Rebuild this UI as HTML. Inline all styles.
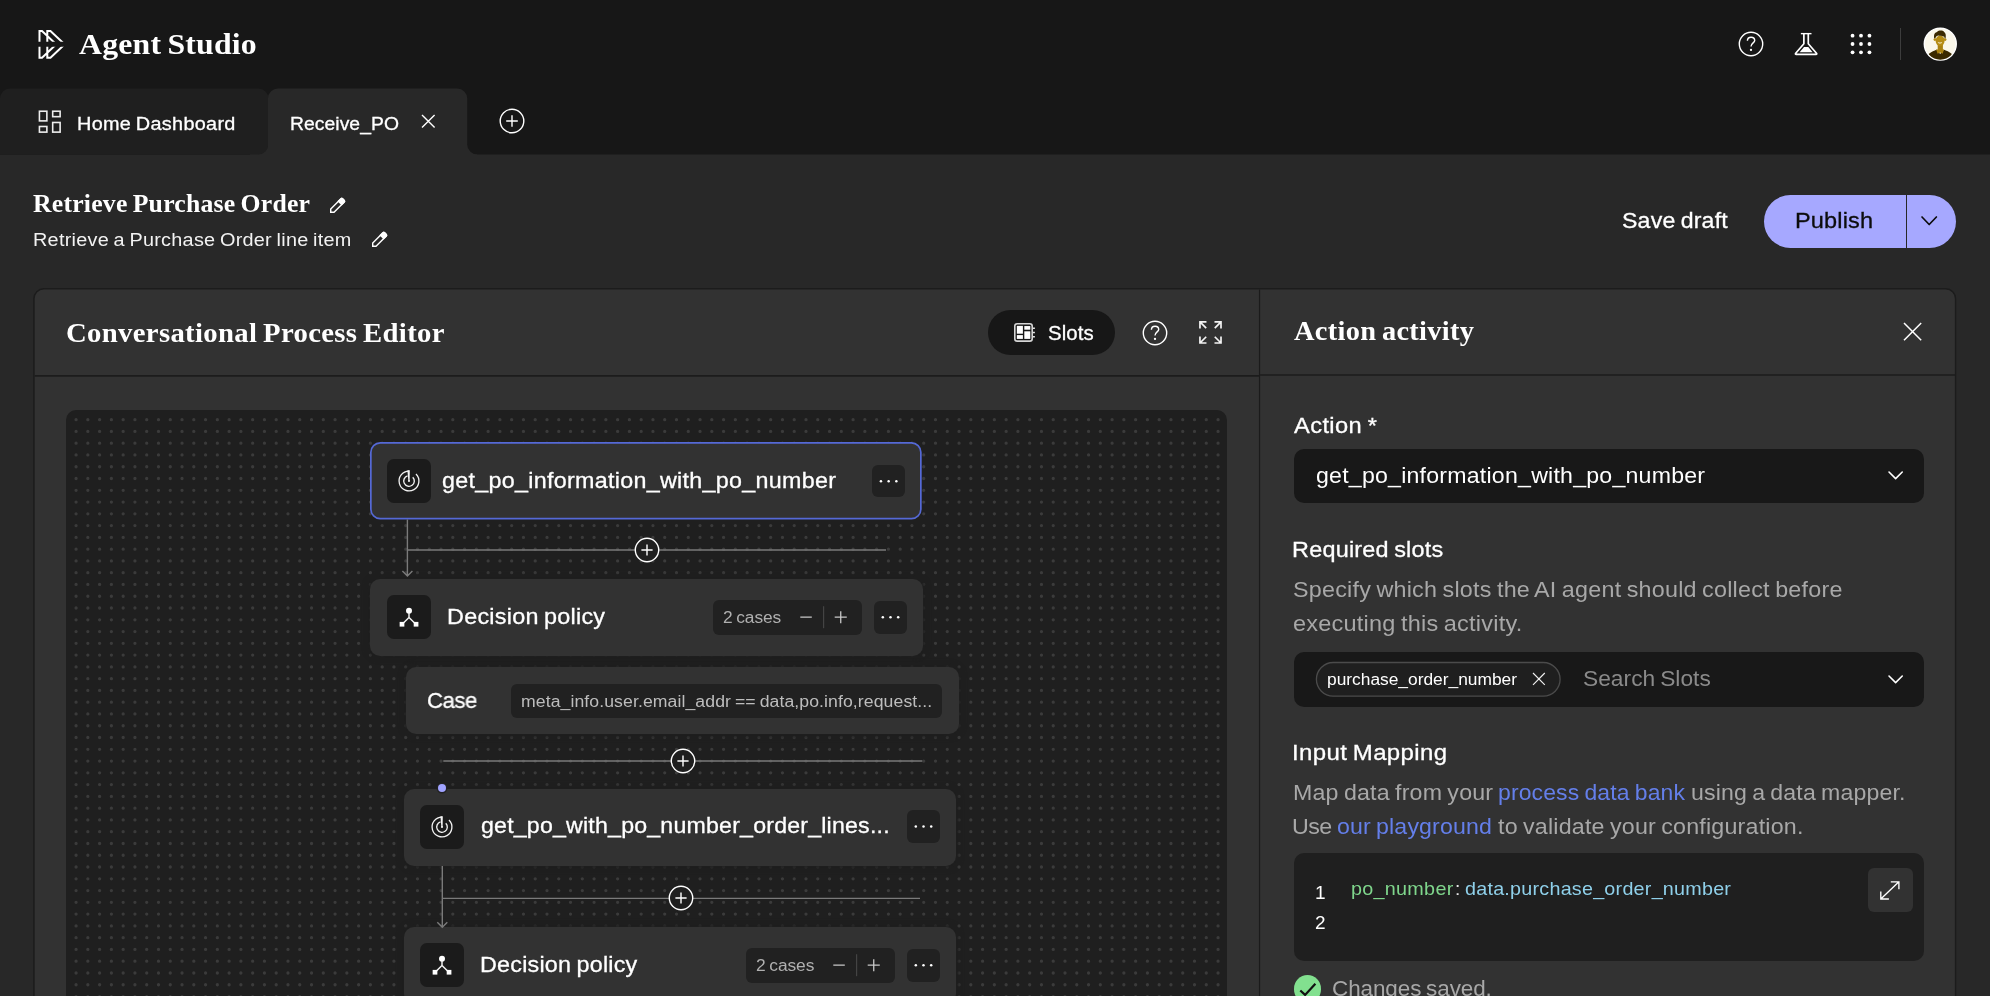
<!DOCTYPE html><html lang="en"><head><meta charset="utf-8"><title>Agent Studio</title><style>
*{box-sizing:border-box;margin:0;padding:0}
html,body{width:1990px;height:996px;overflow:hidden;background:#282828}
body{position:relative;font-family:"Liberation Sans",sans-serif;color:#fff}
.a{position:absolute}
.tx{position:absolute;white-space:nowrap;display:block;transform-origin:0 0;will-change:transform;word-spacing:-0.06em}
.med{-webkit-text-stroke:0.3px currentColor}
svg{position:absolute;overflow:visible}
#canvas{left:66.2px;top:410.2px;width:1160.8px;height:620px;border-radius:10px;background-color:#1f1f1f;overflow:hidden}
.node{background:#323232;border-radius:10px;box-shadow:0 0 5px 3px rgba(31,31,31,.95)}
.ibox{background:#1b1b1b;border-radius:7px}
.dk{background:#212121;border-radius:6px}
.fld{background:#181818;border-radius:10px}
</style></head><body>
<svg id="topbar" style="left:0;top:0" width="1990" height="160" viewBox="0 0 1990 160" fill="none"><rect x="0" y="0" width="1990" height="154.5" fill="#171717"/><rect x="250" y="130" width="20" height="26" fill="#282828"/><path d="M0 98.5A10 10 0 0 1 10 88.5H258.4A10 10 0 0 1 268.4 98.5V144.5A10 10 0 0 1 258.4 154.5H0Z" fill="#1f1f1f"/><path d="M268 156V98.5A10 10 0 0 1 278.4 88.5H457.2A10 10 0 0 1 467.2 98.5V144.5A10 10 0 0 0 477.2 154.5V156Z" fill="#282828"/></svg>
<svg style="left:30px;top:24px" width="42" height="42" viewBox="0 0 42 42" fill="none" ><defs><clipPath id="lg1"><rect x="0" y="0" width="42" height="17.75"/></clipPath><clipPath id="lg2"><rect x="0" y="22.75" width="42" height="20"/></clipPath></defs><g stroke="#fff" stroke-width="2" stroke-linejoin="miter"><g clip-path="url(#lg1)"><path d="M9.49 19V6.96H12.02L24.77 19M17.29 19V6.96H20.46L33.21 19"/></g><g clip-path="url(#lg2)"><path d="M9.49 21.5V33.74H12.02L24.98 21.5M17.29 21.5V33.74H20.46L33.42 21.5"/></g></g></svg>
<span id="t1" class="tx" style="left:79.00px;top:28.6px;font:700 30.4px/1 'Liberation Serif',serif;color:#fff;letter-spacing:0.197px;transform:scaleX(1.0449);">Agent Studio</span>
<svg style="left:30px;top:102px" width="40" height="40" viewBox="0 0 40 40" fill="none" ><g stroke="#ededed" stroke-width="1.6"><rect x="9.43" y="9.23" width="7.44" height="9.65"/><rect x="22.69" y="9.23" width="7.43" height="5.43"/><rect x="9.43" y="24.50" width="7.44" height="5.62"/><rect x="22.69" y="20.48" width="7.43" height="9.64"/></g></svg>
<span id="t2" class="tx med" style="left:77.00px;top:114.6px;font:400 18.9px/1 'Liberation Sans',sans-serif;color:#fff;letter-spacing:0.292px;transform:scaleX(1.0511);">Home Dashboard</span>
<span id="t3" class="tx med" style="left:290.40px;top:114.6px;font:400 18.9px/1 'Liberation Sans',sans-serif;color:#fff;letter-spacing:0.055px;transform:scaleX(1.0223);">Receive_PO</span>
<svg style="left:421.9px;top:115.2px" width="12.6" height="12.6" viewBox="0 0 12.6 12.6" fill="none" ><path d="M0 0L12.6 12.6M12.6 0L0 12.6" stroke="#fff" stroke-width="1.4"/></svg>
<svg style="left:511.5px;top:121.1px" width="1" height="1" viewBox="0 0 1 1" fill="none" ><circle cx="0" cy="0" r="11.8" stroke="#fff" stroke-width="1.4"/><path d="M-5.8 0H5.8M0 -5.8V5.8" stroke="#fff" stroke-width="1.4"/></svg>
<svg style="left:1750.8px;top:44.1px" width="1" height="1" viewBox="0 0 1 1" fill="none" ><circle cx="0" cy="0" r="11.7" stroke="#fff" stroke-width="1.4"/><path d="M-3.6 -3.2C-3.6 -5.6 -1.9 -6.8 0.1 -6.8C2.2 -6.8 3.7 -5.5 3.7 -3.6C3.7 -1.2 0 -0.9 0 2.6" stroke="#fff" stroke-width="1.4" transform="scale(1.0)"/><circle cx="0" cy="5.9" r="1.15" fill="#fff"/></svg>
<svg style="left:1786px;top:24px" width="40" height="40" viewBox="0 0 40 40" fill="none" ><path d="M14.86 9.64H25.5" stroke="#fff" stroke-width="1.4"/><path d="M17.87 9.64V19.68L9.7 29.3Q9 30.3 10.2 30.3H30Q31.2 30.3 30.5 29.3L22.29 19.68V9.64" stroke="#fff" stroke-width="1.7" stroke-linejoin="round"/><path d="M18.07 23.1H22.3L26.6 28.3H13.6Z" fill="#fff"/></svg>
<svg style="left:1861.3px;top:44.4px" width="1" height="1" viewBox="0 0 1 1" fill="none" ><circle cx="-8.45" cy="-8.3" r="1.9" fill="#fff"/><circle cx="-8.45" cy="0" r="1.9" fill="#fff"/><circle cx="-8.45" cy="8.3" r="1.9" fill="#fff"/><circle cx="0" cy="-8.3" r="1.9" fill="#fff"/><circle cx="0" cy="0" r="1.9" fill="#fff"/><circle cx="0" cy="8.3" r="1.9" fill="#fff"/><circle cx="8.45" cy="-8.3" r="1.9" fill="#fff"/><circle cx="8.45" cy="0" r="1.9" fill="#fff"/><circle cx="8.45" cy="8.3" r="1.9" fill="#fff"/></svg>
<div class="a" style="left:1900px;top:28px;width:1.4px;height:32.4px;background:#3d3d3d"></div>
<svg style="left:1920px;top:24px" width="40" height="40" viewBox="0 0 40 40" fill="none" ><defs><clipPath id="avc"><circle cx="20.28" cy="20.08" r="15.6"/></clipPath></defs><circle cx="20.28" cy="20.08" r="16" fill="#faf7ea" stroke="#fff" stroke-width="1.4"/><g clip-path="url(#avc)"><path d="M8.6 30C11.5 27.6 14.6 26.4 16.4 25.7L20.2 30L24 25.7C26.2 26.4 29.2 27.8 31.9 30C30.5 34 25 36.5 20.3 36.5C15 36.5 10.5 34 8.6 30Z" fill="#3a2900"/><path d="M17.7 20.5H22.9V25.4L24.1 25.2L22.6 29.8L20.2 28.4L17.6 29.8L16.1 25.2L17.7 25.4Z" fill="#a98110"/><circle cx="14.9" cy="15.6" r="1.35" fill="#b38a12"/><circle cx="25.1" cy="15.6" r="1.35" fill="#b38a12"/><ellipse cx="20.1" cy="16.7" rx="4.5" ry="5.2" fill="#b58c14"/><path d="M14.1 14.2C13.6 10.8 14.4 8.6 17 8C18.6 6.2 22.6 6 24.2 8C26 9.4 26 11.8 25.6 14.2L24.5 14.2C24.6 12.8 24 12.2 23.4 12.6C21.6 11.6 20 12.4 18.6 11.6C17 12 15.8 12.6 15.4 14.2Z" fill="#3a2900"/><path d="M17.7 18.1C19 18.6 21 18.6 22.2 18.1C21.8 20.2 18.2 20.2 17.7 18.1Z" fill="#efe2b8"/></g></svg>
<span id="t4" class="tx" style="left:33.40px;top:191.8px;font:700 24.3px/1 'Liberation Serif',serif;color:#fff;letter-spacing:0.212px;transform:scaleX(1.0583);">Retrieve Purchase Order</span>
<svg style="left:330.36px;top:212.83px" width="1" height="1" viewBox="0 0 1 1" fill="none" ><g transform="rotate(45)"><path d="M0 -1.03L-2.33 -3.36V-17.5Q-2.33 -19 -0.83 -19H0.83Q2.33 -19 2.33 -17.5V-3.36Z" stroke="#fff" stroke-width="1.45" stroke-linejoin="miter"/><path d="M-3.05 -13.5V-17.9Q-3.05 -19.7 -1.25 -19.7H1.25Q3.05 -19.7 3.05 -17.9V-13.5Z" fill="#fff"/></g></svg>
<span id="t5" class="tx" style="left:32.90px;top:231.4px;font:400 18.9px/1 'Liberation Sans',sans-serif;color:#f2f2f2;letter-spacing:0.247px;transform:scaleX(1.0506);">Retrieve a Purchase Order line item</span>
<svg style="left:372.36px;top:246.5px" width="1" height="1" viewBox="0 0 1 1" fill="none" ><g transform="rotate(45)"><path d="M0 -1.03L-2.33 -3.36V-17.5Q-2.33 -19 -0.83 -19H0.83Q2.33 -19 2.33 -17.5V-3.36Z" stroke="#fff" stroke-width="1.45" stroke-linejoin="miter"/><path d="M-3.05 -13.5V-17.9Q-3.05 -19.7 -1.25 -19.7H1.25Q3.05 -19.7 3.05 -17.9V-13.5Z" fill="#fff"/></g></svg>
<span id="t6" class="tx med" style="left:1621.64px;top:210.3px;font:400 22.4px/1 'Liberation Sans',sans-serif;color:#fff;letter-spacing:0.181px;transform:scaleX(1.0324);">Save draft</span>
<div class="a" style="left:1763.9px;top:195.1px;width:191.9px;height:52.7px;border-radius:26.4px;background:#a6a8ff"></div>
<div class="a" style="left:1905.6px;top:195.1px;width:1.3px;height:52.7px;background:#282828"></div>
<span id="t7" class="tx med" style="left:1795.38px;top:210.3px;font:400 22.4px/1 'Liberation Sans',sans-serif;color:#0c0c0c;letter-spacing:0.155px;transform:scaleX(1.0500);">Publish</span>
<svg style="left:1921.7px;top:217.25px" width="14.4" height="7.5" viewBox="0 0 14.4 7.5" fill="none" ><path d="M0 0L7.2 7.5L14.4 0" stroke="#0c0c0c" stroke-width="1.7" stroke-linecap="round" stroke-linejoin="round"/></svg>
<svg id="panel" style="left:0;top:0" width="1990" height="996" viewBox="0 0 1990 996" fill="none"><rect x="33.95" y="288.8" width="1921.6" height="730" rx="9.8" fill="#323232" stroke="#1c1c1c" stroke-width="1.45"/><path d="M1259.55 289.5V996" stroke="#1b1b1b" stroke-width="1.2"/><path d="M34.6 375.9H1259" stroke="#1c1c1c" stroke-width="1.6"/><path d="M1260.1 375H1955" stroke="#1c1c1c" stroke-width="1.6"/></svg>
<span id="t8" class="tx" style="left:65.70px;top:319.7px;font:700 26.5px/1 'Liberation Serif',serif;color:#fff;letter-spacing:0.303px;transform:scaleX(1.0836);">Conversational Process Editor</span>
<div class="a" style="left:987.7px;top:310.2px;width:127.5px;height:44.6px;border-radius:22.3px;background:#171717"></div>
<svg style="left:1004px;top:312px" width="40" height="40" viewBox="0 0 40 40" fill="none" ><rect x="10.8" y="11.7" width="17.4" height="17.4" rx="2.4" stroke="#d6d6d6" stroke-width="1.6"/><rect x="12.85" y="13.86" width="6.05" height="7.85" fill="#fff"/><rect x="12.85" y="23.1" width="6.05" height="3.8" fill="#fff"/><rect x="20.3" y="14.05" width="6" height="3.65" fill="#fff"/><rect x="20.3" y="19.3" width="6" height="7.6" fill="#fff"/><path d="M28.9 16.3H30.9M28.9 20.5H30.9M28.9 24.7H30.9" stroke="#e6e6e6" stroke-width="1.4"/></svg>
<span id="t9" class="tx med" style="left:1048.22px;top:323.8px;font:400 19.7px/1 'Liberation Sans',sans-serif;color:#fff;letter-spacing:0.120px;transform:scaleX(1.0346);">Slots</span>
<svg style="left:1155.2px;top:332.5px" width="1" height="1" viewBox="0 0 1 1" fill="none" ><circle cx="0" cy="0" r="11.7" stroke="#fff" stroke-width="1.4"/><path d="M-3.6 -3.2C-3.6 -5.6 -1.9 -6.8 0.1 -6.8C2.2 -6.8 3.7 -5.5 3.7 -3.6C3.7 -1.2 0 -0.9 0 2.6" stroke="#fff" stroke-width="1.4" transform="scale(1.0)"/><circle cx="0" cy="5.9" r="1.15" fill="#fff"/></svg>
<svg style="left:1190px;top:312px" width="40" height="40" viewBox="0 0 40 40" fill="none" ><path d="M16.47 9.96H9.96V16.47M9.96 9.96L16.2 16.2M24.5 9.96H31V16.47M31 9.96L24.76 16.2M9.96 24.5V31H16.47M9.96 31L16.2 24.76M31 24.5V31H24.5M31 31L24.76 24.76" stroke="#f4f4f4" stroke-width="1.7"/></svg>
<span id="t10" class="tx" style="left:1293.90px;top:319.3px;font:700 26.3px/1 'Liberation Serif',serif;color:#fff;letter-spacing:0.281px;transform:scaleX(1.0795);">Action activity</span>
<svg style="left:1904.0px;top:322.79999999999995px" width="17.2" height="17.2" viewBox="0 0 17.2 17.2" fill="none" ><path d="M0 0L17.2 17.2M17.2 0L0 17.2" stroke="#fff" stroke-width="1.5"/></svg>
<div id="canvas" class="a"><svg style="left:0;top:0" width="1161" height="590" viewBox="0 0 1161 590" fill="none"><path d="M10.07 9.65H1153M10.07 21.42H1153M10.07 33.20H1153M10.07 44.97H1153M10.07 56.74H1153M10.07 68.52H1153M10.07 80.29H1153M10.07 92.06H1153M10.07 103.83H1153M10.07 115.61H1153M10.07 127.38H1153M10.07 139.15H1153M10.07 150.93H1153M10.07 162.70H1153M10.07 174.47H1153M10.07 186.25H1153M10.07 198.02H1153M10.07 209.79H1153M10.07 221.56H1153M10.07 233.34H1153M10.07 245.11H1153M10.07 256.88H1153M10.07 268.66H1153M10.07 280.43H1153M10.07 292.20H1153M10.07 303.97H1153M10.07 315.75H1153M10.07 327.52H1153M10.07 339.29H1153M10.07 351.07H1153M10.07 362.84H1153M10.07 374.61H1153M10.07 386.39H1153M10.07 398.16H1153M10.07 409.93H1153M10.07 421.70H1153M10.07 433.48H1153M10.07 445.25H1153M10.07 457.02H1153M10.07 468.80H1153M10.07 480.57H1153M10.07 492.34H1153M10.07 504.12H1153M10.07 515.89H1153M10.07 527.66H1153M10.07 539.43H1153M10.07 551.21H1153M10.07 562.98H1153M10.07 574.75H1153M10.07 586.53H1153" stroke="#3b3b3b" stroke-width="3.3" stroke-linecap="round" stroke-dasharray="0 11.773"/></svg></div>
<svg style="left:0;top:0" width="1990" height="996" viewBox="0 0 1990 996" fill="none"><rect x="370.85" y="442.85" width="550" height="75.85" rx="9.4" fill="#323232" stroke="#5569d6" stroke-width="1.7"/></svg>
<div class="a ibox" style="left:387.1px;top:458.7px;width:43.9px;height:44.1px"></div>
<svg style="left:409.05px;top:480.9px" width="1" height="1" viewBox="0 0 1 1" fill="none" ><path d="M0 -9.9A9.9 9.9 0 1 0 7 -7" stroke="#f2f2f2" stroke-width="1.3"/><path d="M-1.5 -5.08A5.3 5.3 0 1 0 3.75 -3.75" stroke="#f2f2f2" stroke-width="1.35"/><path d="M-1.6 -10.7L0.8 -10.75L0.62 0.2H-0.62Z" fill="#f2f2f2"/><circle cx="0" cy="0" r="0.95" fill="#fff"/></svg>
<span id="t24" class="tx med" style="left:441.76px;top:469.9px;font:400 22.4px/1 'Liberation Sans',sans-serif;color:#fff;letter-spacing:0.290px;transform:scaleX(1.0397);">get_po_information_with_po_number</span>
<div class="a dk" style="left:872px;top:464.5px;width:33.3px;height:32.5px"></div><svg style="left:872px;top:464.5px" width="33.3" height="32.5" viewBox="0 0 33.3 32.5" fill="none" ><circle cx="8.95" cy="16.25" r="1.25" fill="#fff"/><circle cx="16.65" cy="16.25" r="1.25" fill="#fff"/><circle cx="24.349999999999998" cy="16.25" r="1.25" fill="#fff"/></svg>
<div class="a node" style="left:370px;top:578.7px;width:552.5px;height:77.5px"></div>
<div class="a ibox" style="left:387.1px;top:595.2px;width:43.9px;height:44.1px"></div>
<svg style="left:408.97px;top:616.97px" width="1" height="1" viewBox="0 0 1 1" fill="none" ><circle cx="0" cy="-6.15" r="3" fill="#fff"/><path d="M0 -4V0.4L-5.6 6M0 0.4L5.6 6" stroke="#f4f4f4" stroke-width="1.45"/><rect x="-9.35" y="4.9" width="4.7" height="4.7" fill="#fff"/><rect x="4.7" y="4.9" width="4.7" height="4.7" fill="#fff"/></svg>
<span id="t25" class="tx med" style="left:446.99px;top:606.0px;font:400 22.4px/1 'Liberation Sans',sans-serif;color:#fff;letter-spacing:0.237px;transform:scaleX(1.0443);">Decision policy</span>
<div class="a dk" style="left:712.5px;top:599.9px;width:149.5px;height:34.8px"></div><svg style="left:712.5px;top:599.9px" width="149.5" height="34.8" viewBox="0 0 149.5 34.8" fill="none" ><path d="M87.3 17.2H98.8M121.7 17.2H133.8M127.75 11.2V23.2" stroke="#c8c8c8" stroke-width="1.3"/><path d="M110.6 6.2V28.2" stroke="#444" stroke-width="1.2"/></svg>
<span id="t26" class="tx" style="left:723.34px;top:609.2px;font:400 17.3px/1 'Liberation Sans',sans-serif;color:#b0b0b0;letter-spacing:-0.090px;transform:scaleX(1.0037);">2 cases</span>
<div class="a dk" style="left:873.5px;top:601px;width:33px;height:32.6px"></div><svg style="left:873.5px;top:601px" width="33" height="32.6" viewBox="0 0 33 32.6" fill="none" ><circle cx="8.8" cy="16.3" r="1.25" fill="#fff"/><circle cx="16.5" cy="16.3" r="1.25" fill="#fff"/><circle cx="24.2" cy="16.3" r="1.25" fill="#fff"/></svg>
<div class="a node" style="left:406.1px;top:667.1px;width:553.3px;height:67.3px"></div>
<span id="t27" class="tx med" style="left:427.40px;top:689.7px;font:400 22.4px/1 'Liberation Sans',sans-serif;color:#fff;letter-spacing:-0.426px;transform:scaleX(0.9877);">Case</span>
<div class="a dk" style="left:510.6px;top:683.8px;width:431.4px;height:34.5px"></div>
<span id="t28" class="tx" style="left:521.10px;top:692.7px;font:400 17.3px/1 'Liberation Sans',sans-serif;color:#bdbdbd;letter-spacing:0.077px;transform:scaleX(1.0216);">meta_info.user.email_addr == data,po.info,request...</span>
<div class="a" style="left:438.1px;top:783.9px;width:8.4px;height:8.4px;border-radius:50%;background:#a0a3ff;z-index:3;box-shadow:0 0 0 1.5px #222"></div>
<div class="a node" style="left:403.7px;top:788.8px;width:552.6px;height:77.2px"></div>
<div class="a ibox" style="left:420.2px;top:805.1px;width:43.9px;height:44.1px"></div>
<svg style="left:442.2px;top:827.2px" width="1" height="1" viewBox="0 0 1 1" fill="none" ><path d="M0 -9.9A9.9 9.9 0 1 0 7 -7" stroke="#f2f2f2" stroke-width="1.3"/><path d="M-1.5 -5.08A5.3 5.3 0 1 0 3.75 -3.75" stroke="#f2f2f2" stroke-width="1.35"/><path d="M-1.6 -10.7L0.8 -10.75L0.62 0.2H-0.62Z" fill="#f2f2f2"/><circle cx="0" cy="0" r="0.95" fill="#fff"/></svg>
<span id="t29" class="tx med" style="left:480.89px;top:815.2px;font:400 22.4px/1 'Liberation Sans',sans-serif;color:#fff;letter-spacing:0.196px;transform:scaleX(1.0338);">get_po_with_po_number_order_lines...</span>
<div class="a dk" style="left:906.6px;top:810.4px;width:33px;height:33px"></div><svg style="left:906.6px;top:810.4px" width="33" height="33" viewBox="0 0 33 33" fill="none" ><circle cx="8.8" cy="16.5" r="1.25" fill="#fff"/><circle cx="16.5" cy="16.5" r="1.25" fill="#fff"/><circle cx="24.2" cy="16.5" r="1.25" fill="#fff"/></svg>
<div class="a node" style="left:403.7px;top:926.9px;width:552.6px;height:77.5px"></div>
<div class="a ibox" style="left:420.2px;top:943.3px;width:43.9px;height:44.1px"></div>
<svg style="left:442.2px;top:965.1px" width="1" height="1" viewBox="0 0 1 1" fill="none" ><circle cx="0" cy="-6.15" r="3" fill="#fff"/><path d="M0 -4V0.4L-5.6 6M0 0.4L5.6 6" stroke="#f4f4f4" stroke-width="1.45"/><rect x="-9.35" y="4.9" width="4.7" height="4.7" fill="#fff"/><rect x="4.7" y="4.9" width="4.7" height="4.7" fill="#fff"/></svg>
<span id="t30" class="tx med" style="left:480.31px;top:953.5px;font:400 22.4px/1 'Liberation Sans',sans-serif;color:#fff;letter-spacing:0.213px;transform:scaleX(1.0418);">Decision policy</span>
<div class="a dk" style="left:745.8px;top:947.9px;width:149.5px;height:34.8px"></div><svg style="left:745.8px;top:947.9px" width="149.5" height="34.8" viewBox="0 0 149.5 34.8" fill="none" ><path d="M87.3 17.2H98.8M121.7 17.2H133.8M127.75 11.2V23.2" stroke="#c8c8c8" stroke-width="1.3"/><path d="M110.6 6.2V28.2" stroke="#444" stroke-width="1.2"/></svg>
<span id="t31" class="tx" style="left:756.24px;top:956.6px;font:400 17.3px/1 'Liberation Sans',sans-serif;color:#b0b0b0;letter-spacing:-0.083px;transform:scaleX(1.0065);">2 cases</span>
<div class="a dk" style="left:906.6px;top:949.1px;width:33px;height:32.6px"></div><svg style="left:906.6px;top:949.1px" width="33" height="32.6" viewBox="0 0 33 32.6" fill="none" ><circle cx="8.8" cy="16.3" r="1.25" fill="#fff"/><circle cx="16.5" cy="16.3" r="1.25" fill="#fff"/><circle cx="24.2" cy="16.3" r="1.25" fill="#fff"/></svg>
<svg style="left:0;top:0" width="1990" height="996" viewBox="0 0 1990 996" fill="none" stroke="#7a7a7a" stroke-width="1.4"><path d="M407.4 519.5V575.6M407.4 550H886M402.4 570.9L407.4 575.9L412.4 570.9"/><path d="M443.3 761H922.2"/><path d="M442.3 866V927M442.3 898.4H920M437.3 922.3L442.3 927.3L447.3 922.3"/></svg>
<svg style="left:646.6px;top:550px" width="1" height="1" viewBox="0 0 1 1" fill="none" ><circle cx="0" cy="0" r="11.7" fill="#1f1f1f" stroke="#fff" stroke-width="1.4"/><path d="M-5.6 0H5.6M0 -5.6V5.6" stroke="#fff" stroke-width="1.4"/></svg>
<svg style="left:682.7px;top:761px" width="1" height="1" viewBox="0 0 1 1" fill="none" ><circle cx="0" cy="0" r="11.7" fill="#1f1f1f" stroke="#fff" stroke-width="1.4"/><path d="M-5.6 0H5.6M0 -5.6V5.6" stroke="#fff" stroke-width="1.4"/></svg>
<svg style="left:681.3px;top:898.4px" width="1" height="1" viewBox="0 0 1 1" fill="none" ><circle cx="0" cy="0" r="11.7" fill="#1f1f1f" stroke="#fff" stroke-width="1.4"/><path d="M-5.6 0H5.6M0 -5.6V5.6" stroke="#fff" stroke-width="1.4"/></svg>
<span id="t11" class="tx med" style="left:1294.41px;top:414.8px;font:400 22.4px/1 'Liberation Sans',sans-serif;color:#fff;letter-spacing:0.388px;transform:scaleX(1.0553);">Action *</span>
<div class="a fld" style="left:1293.6px;top:448.8px;width:630.1px;height:54.7px"></div>
<span id="t12" class="tx" style="left:1315.62px;top:464.8px;font:400 22.4px/1 'Liberation Sans',sans-serif;color:#fff;letter-spacing:0.217px;transform:scaleX(1.0329);">get_po_information_with_po_number</span>
<svg style="left:1889.375px;top:472.4px" width="13.25" height="6.6" viewBox="0 0 13.25 6.6" fill="none" ><path d="M0 0L6.625 6.6L13.25 0" stroke="#fff" stroke-width="1.6" stroke-linecap="round" stroke-linejoin="round"/></svg>
<span id="t13" class="tx med" style="left:1292.10px;top:538.8px;font:400 22.4px/1 'Liberation Sans',sans-serif;color:#fff;letter-spacing:0.218px;transform:scaleX(1.0459);">Required slots</span>
<span id="t14" class="tx" style="left:1293.30px;top:578.9px;font:400 22.4px/1 'Liberation Sans',sans-serif;color:#a8a8a8;letter-spacing:0.230px;transform:scaleX(1.0407);">Specify which slots the AI agent should collect before</span>
<span id="t15" class="tx" style="left:1293.30px;top:612.6px;font:400 22.4px/1 'Liberation Sans',sans-serif;color:#a8a8a8;letter-spacing:0.213px;transform:scaleX(1.0500);">executing this activity.</span>
<div class="a fld" style="left:1293.6px;top:652px;width:630.1px;height:54.7px"></div>
<svg style="left:0;top:0" width="1990" height="996" viewBox="0 0 1990 996" fill="none"><rect x="1316.4" y="662.5" width="243.7" height="33.6" rx="16.8" fill="#1f1f1f" stroke="#4b4b4b" stroke-width="1.3"/></svg>
<span id="t16" class="tx" style="left:1326.60px;top:670.6px;font:400 17.3px/1 'Liberation Sans',sans-serif;color:#fff;letter-spacing:-0.005px;transform:scaleX(1.0045);">purchase_order_number</span>
<svg style="left:1532.8999999999999px;top:673.35px" width="11.8" height="11.8" viewBox="0 0 11.8 11.8" fill="none" ><path d="M0 0L11.8 11.8M11.8 0L0 11.8" stroke="#f0f0f0" stroke-width="1.15"/></svg>
<span id="t17" class="tx" style="left:1582.50px;top:668.2px;font:400 22.4px/1 'Liberation Sans',sans-serif;color:#8a8a8a;letter-spacing:0.014px;transform:scaleX(1.0165);">Search Slots</span>
<svg style="left:1889.375px;top:675.6px" width="13.25" height="6.6" viewBox="0 0 13.25 6.6" fill="none" ><path d="M0 0L6.625 6.6L13.25 0" stroke="#fff" stroke-width="1.6" stroke-linecap="round" stroke-linejoin="round"/></svg>
<span id="t18" class="tx med" style="left:1292.30px;top:742.0px;font:400 22.4px/1 'Liberation Sans',sans-serif;color:#fff;letter-spacing:0.354px;transform:scaleX(1.0703);">Input Mapping</span>
<span id="t19a" class="tx" style="left:1292.60px;top:781.5px;font:400 22.4px/1 'Liberation Sans',sans-serif;color:#a8a8a8;letter-spacing:0.179px;transform:scaleX(1.0357);">Map data from your</span>
<span id="t19b" class="tx" style="left:1498.00px;top:781.5px;font:400 22.4px/1 'Liberation Sans',sans-serif;color:#647fea;letter-spacing:0.135px;transform:scaleX(1.0249);">process data bank</span>
<span id="t19c" class="tx" style="left:1690.80px;top:781.5px;font:400 22.4px/1 'Liberation Sans',sans-serif;color:#a8a8a8;letter-spacing:0.138px;transform:scaleX(1.0323);">using a data mapper.</span>
<span id="t20a" class="tx" style="left:1291.89px;top:815.5px;font:400 22.4px/1 'Liberation Sans',sans-serif;color:#a8a8a8;letter-spacing:-0.504px;transform:scaleX(1.0385);">Use</span>
<span id="t20b" class="tx" style="left:1336.92px;top:815.5px;font:400 22.4px/1 'Liberation Sans',sans-serif;color:#647fea;letter-spacing:0.141px;transform:scaleX(1.0335);">our playground</span>
<span id="t20c" class="tx" style="left:1497.90px;top:815.5px;font:400 22.4px/1 'Liberation Sans',sans-serif;color:#a8a8a8;letter-spacing:0.192px;transform:scaleX(1.0380);">to validate your configuration.</span>
<div class="a" style="left:1293.6px;top:852.8px;width:630.1px;height:107.8px;border-radius:10px;background:#1f1f1f"></div>
<span id="t21a" class="tx" style="left:1314.90px;top:882.8px;font:400 19.0px/1 'Liberation Sans',sans-serif;color:#fff;">1</span>
<span id="t21b" class="tx" style="left:1315.04px;top:913.2px;font:400 19.0px/1 'Liberation Sans',sans-serif;color:#fff;">2</span>
<span id="t22a" class="tx" style="left:1351.30px;top:878.7px;font:400 19.0px/1 'Liberation Sans',sans-serif;color:#7fd68c;letter-spacing:0.260px;transform:scaleX(1.0412);">po_number</span>
<span id="t22b" class="tx" style="left:1454.66px;top:878.7px;font:400 19.0px/1 'Liberation Sans',sans-serif;color:#e8e8e8;">:</span>
<span id="t22c" class="tx" style="left:1465.36px;top:878.7px;font:400 19.0px/1 'Liberation Sans',sans-serif;color:#8fd0ea;letter-spacing:0.228px;transform:scaleX(1.0387);">data.purchase_order_number</span>
<div class="a" style="left:1868.3px;top:868.3px;width:44.5px;height:44.1px;border-radius:6px;background:#323232"></div>
<svg style="left:1880.1px;top:880.6px" width="20" height="19" viewBox="0 0 20 19" fill="none" ><path d="M10.8 0.8H18.9V8.3M18.9 0.8L0.8 18M0.8 10.5V18H8.9" stroke="#fff" stroke-width="1.35"/></svg>
<div class="a" style="left:1293.6px;top:975.3px;width:27.7px;height:27.7px;border-radius:50%;background:#82e08f"></div>
<svg style="left:1293.6px;top:975.3px" width="27.7" height="27.7" viewBox="0 0 27.7 27.7" fill="none" ><path d="M6.3 15.5L11.1 19.9L21.4 8.7" stroke="#111" stroke-width="2.2"/></svg>
<span id="t23" class="tx" style="left:1331.80px;top:978.2px;font:400 22.4px/1 'Liberation Sans',sans-serif;color:#a8a8a8;letter-spacing:-0.096px;transform:scaleX(1.0038);">Changes saved.</span>
</body></html>
